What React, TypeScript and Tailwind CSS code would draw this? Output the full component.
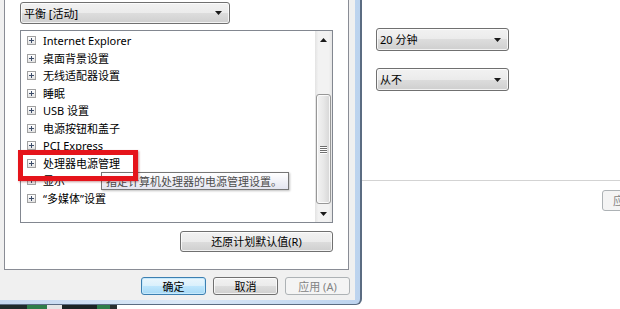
import React from "react";

const rows = [
  "Internet Explorer",
  "桌面背景设置",
  "无线适配器设置",
  "睡眠",
  "USB 设置",
  "电源按钮和盖子",
  "PCI Express",
  "处理器电源管理",
  "显示",
  "“多媒体”设置",
];

function Arrow({ up = false }: { up?: boolean }) {
  return (
    <svg width="7" height="4" viewBox="0 0 7 4" className="block">
      <polygon points={up ? "0,4 7,4 3.5,0" : "0,0 7,0 3.5,4"} fill="#1a1a1a" />
    </svg>
  );
}

function Combo({ label, className = "" }: { label: string; className?: string }) {
  return (
    <div
      className={`flex items-center justify-between rounded-[3px] border border-[#707070] bg-[linear-gradient(#f2f2f2,#ebebeb_50%,#dddddd_50%,#cfcfcf)] pl-[3px] pr-[7px] text-[11px] leading-none text-black shadow-[inset_0_0_0_1px_rgba(255,255,255,0.75)] ${className}`}
    >
      <span>{label}</span>
      <Arrow />
    </div>
  );
}

function PlusBox() {
  return (
    <span className="flex h-[9px] w-[9px] shrink-0 items-center justify-center border border-[#a0a0a0] bg-[linear-gradient(#ffffff,#e3e3e3)]">
      <svg width="5" height="5" viewBox="0 0 5 5" className="block">
        <rect x="0" y="2" width="5" height="1" fill="#3d4d6a" />
        <rect x="2" y="0" width="1" height="5" fill="#3d4d6a" />
      </svg>
    </span>
  );
}

function Scrollbar() {
  return (
    <div className="flex w-[17px] shrink-0 flex-col bg-[linear-gradient(90deg,#e3e3e3,#f2f2f2_20%,#f2f2f2_80%,#e6e6e6)]">
      <div className="flex h-[17px] items-center justify-center">
        <Arrow up />
      </div>
      <div className="flex-1 px-[1px] pt-[46px]">
        <div className="flex h-[110px] items-center justify-center rounded-[3px] border border-[#979797] bg-[linear-gradient(90deg,#f3f3f3,#e8e8e8_50%,#d6d6d6)] shadow-[inset_0_0_0_1px_rgba(255,255,255,0.8)]">
          <div className="flex flex-col gap-[1px]">
            {[0, 1, 2, 3].map((i) => (
              <div key={i} className="h-[1px] w-[7px] bg-[#6f6f6f] shadow-[0_1px_0_#ffffff]" />
            ))}
          </div>
        </div>
      </div>
      <div className="flex h-[17px] items-center justify-center">
        <Arrow />
      </div>
    </div>
  );
}

function Button({
  label,
  variant = "normal",
  className = "",
}: {
  label: string;
  variant?: "normal" | "default" | "disabled";
  className?: string;
}) {
  const look =
    variant === "default"
      ? "border-[#3c7fb1] bg-[linear-gradient(#eaf6fd,#d9f0fc_50%,#bee6fd_50%,#a7d9f5)] text-black shadow-[inset_0_0_0_1px_#c6e9fc]"
      : variant === "disabled"
        ? "border-[#adb2b5] bg-[#f4f4f4] text-[#838383]"
        : "border-[#707070] bg-[linear-gradient(#f2f2f2,#ebebeb_50%,#dddddd_50%,#cfcfcf)] text-black shadow-[inset_0_0_0_1px_rgba(255,255,255,0.75)]";
  return (
    <div
      className={`flex items-center justify-center whitespace-nowrap rounded-[3px] border text-[11px] leading-none ${look} ${className}`}
    >
      {label}
    </div>
  );
}

export default function App() {
  return (
    <div className="relative flex h-[309px] w-[620px] overflow-hidden bg-white font-['Noto_Sans','Noto_Sans_CJK_SC',sans-serif]">
      {/* dialog */}
      <div className="flex w-[362px] shrink-0 flex-col">
        <div className="h-[305px] rounded-br-[6px] border-r-2 border-b border-[#5b6c82] bg-[linear-gradient(90deg,#c4d8f0,#dbe8f7_50%,#bcd3ee)] pr-[5px] pb-[4px]">
          <div className="flex h-full flex-col bg-[#f0f0f0]">
            <div className="ml-[4px] flex h-[270px] w-[345px] flex-col border-x border-b border-[#898c95] bg-white pt-[2px] pl-[15px]">
              <Combo label="平衡 [活动]" className="h-[22px] w-[210px]" />
              <div className="mt-[6px] flex h-[193px] w-[313px] border border-[#828790]">
                <div className="flex-1 pt-[1px]">
                  {rows.map((r) => (
                    <div
                      key={r}
                      className="flex h-[17.5px] items-center gap-[7px] pl-[6px] text-[11px] leading-none text-black"
                    >
                      <PlusBox />
                      <span>{r}</span>
                    </div>
                  ))}
                </div>
                <Scrollbar />
              </div>
              <div className="flex w-[313px] justify-end">
                <Button label="还原计划默认值(R)" className="mt-[8px] h-[21px] w-[153px]" />
              </div>
            </div>
            <div className="mt-[7px] ml-[141px] flex gap-[7px]">
              <Button label="确定" variant="default" className="h-[18px] w-[65px]" />
              <Button label="取消" className="h-[18px] w-[65px]" />
              <Button label="应用 (A)" variant="disabled" className="h-[18px] w-[65px]" />
            </div>
          </div>
        </div>
        <div className="flex h-[4px] w-[117px]">
          <div className="w-[27px] bg-[#1f2b2b]" />
          <div className="w-[20px] bg-[#2f7d49]" />
          <div className="w-[15px] bg-[#e6e6e6]" />
          <div className="w-[35px] bg-[#1c2424]" />
          <div className="w-[13px] bg-[#2f7d49]" />
          <div className="w-[7px] bg-[#2a3030]" />
        </div>
      </div>

      {/* right pane */}
      <div className="flex flex-1 flex-col">
        <Combo label="20 分钟" className="mt-[28px] ml-[14px] h-[23px] w-[133px]" />
        <Combo label="从不" className="mt-[17px] ml-[14px] h-[23px] w-[133px]" />
        <div className="mt-[89px] h-px w-full bg-[#d3d3d3]" />
        <Button
          label="应用"
          variant="disabled"
          className="mt-[9px] ml-[240px] h-[21px] w-[60px] shrink-0 justify-start pl-[10px]"
        />
      </div>

      {/* tooltip */}
      <div className="absolute top-[172px] left-[101px] flex h-[18px] items-center whitespace-nowrap border border-[#767676] bg-[linear-gradient(#ffffff,#e4e5f0)] pr-[6px] pl-[4px] text-[11px] leading-none text-[#4c4c4c] shadow-[1px_1px_2px_rgba(0,0,0,0.25)]">
        指定计算机处理器的电源管理设置。
      </div>

      {/* red highlight */}
      <div className="absolute top-[150px] left-[18px] h-[31px] w-[120px] border-[5px] border-[#e5141b] shadow-[1px_1px_2px_rgba(120,0,0,0.4)]" />
    </div>
  );
}
